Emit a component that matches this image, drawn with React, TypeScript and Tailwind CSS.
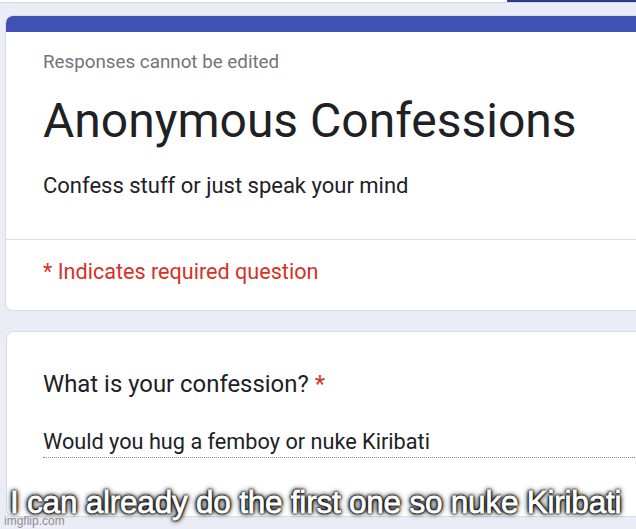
export default function App() {
  return (
    <div className="relative h-[529px] w-[636px] overflow-hidden bg-[#eaecf6] font-['Roboto',sans-serif]">
      {/* top strip */}
      <div className="flex h-[3px] border-b border-[#d4d6dc] bg-white">
        <div className="flex-1" />
        <div className="w-[129px] bg-[#2f3d8e]" />
      </div>

      {/* header card */}
      <div className="ml-[5px] mt-[12px] w-[660px] overflow-hidden rounded-lg border border-[#dadce0] bg-white">
        <div className="h-[16px] bg-[#3f51b5]" />
        <div className="pl-[37px] pt-[18px]">
          <div className="text-[18.8px] leading-[24px] text-[#70757a]">Responses cannot be edited</div>
          <div className="mt-[19px] text-[48px] leading-[56px] text-[#202124]">Anonymous Confessions</div>
          <div className="mt-[23px] text-[22px] leading-[28px] text-[#202124]">Confess stuff or just speak your mind</div>
        </div>
        <div className="mt-[39px] border-t border-[#dadce0]" />
        <div className="pb-[24px] pl-[37px] pt-[18px] text-[21.6px] leading-[28px] text-[#d93025]">
          * Indicates required question
        </div>
      </div>

      {/* question card */}
      <div className="ml-[6px] mt-[20px] h-[186px] w-[660px] rounded-lg border border-[#dadce0] bg-white pl-[36px] pt-[37px]">
        <div className="text-[23.9px] leading-[30px] text-[#202124]">
          What is your confession? <span className="text-[#d93025]">*</span>
        </div>
        <div className="mt-[29px] border-b border-dotted border-[#80868b] pb-[1px] text-[21.7px] leading-[28px] text-[#202124]">
          Would you hug a femboy or nuke Kiribati
        </div>
      </div>

      {/* meme caption */}
      <div className="absolute left-[10px] top-[484px] whitespace-nowrap font-['Liberation_Sans',sans-serif] text-[31.5px] leading-[36px] tracking-[-0.22px] text-white [-webkit-text-stroke:0.8px_#fff] [text-shadow:0_0_2px_#000,0_0_2px_#000,0_0_3px_#000,0_0_3px_#000,0_0_5px_#000,0_0_6px_#000]">
        I can already do the first one so nuke Kiribati
      </div>
      <div className="absolute left-[4px] top-[514px] z-10 font-['Liberation_Sans',sans-serif] text-[12px] leading-[14px] text-[#8e8e8e]">
        imgflip.com
      </div>
    </div>
  );
}
